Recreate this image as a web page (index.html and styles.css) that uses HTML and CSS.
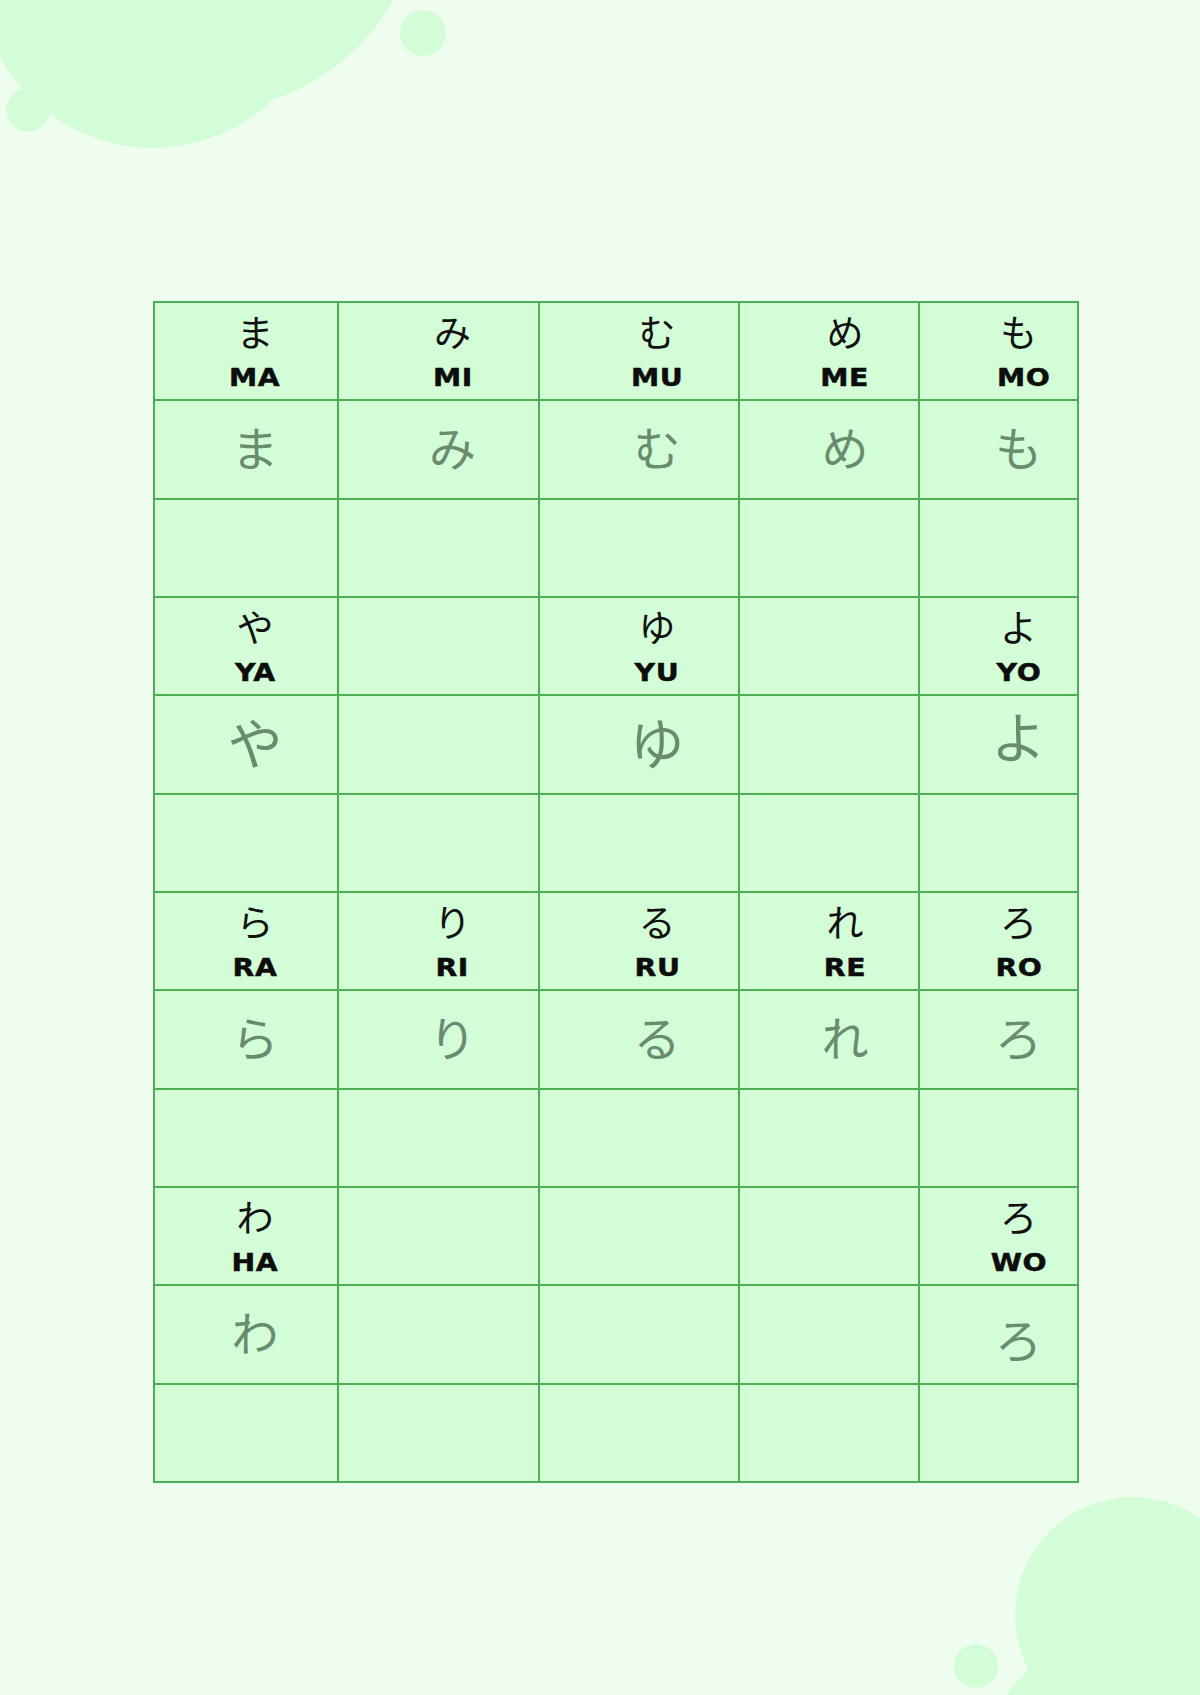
FILE: index.html
```html
<!DOCTYPE html>
<html lang="ja">
<head>
<meta charset="utf-8">
<title>Hiragana Chart</title>
<link rel="stylesheet" href="styles.css">
</head>
<body>
<div class="page">
  <svg class="deco" width="1200" height="1695" viewBox="0 0 1200 1695" aria-hidden="true">
    <circle cx="153" cy="-26" r="174"/>
    <circle cx="200" cy="-112" r="224"/>
    <circle cx="28" cy="110" r="22"/>
    <circle cx="423" cy="33" r="23"/>
    <circle cx="1133" cy="1615" r="118"/>
    <circle cx="1150" cy="1800" r="178"/>
    <circle cx="976" cy="1666" r="22"/>
  </svg>

  <div class="sheet">
    <!-- row 1 -->
    <div class="cell head"><span class="kana">ま</span><span class="roma">MA</span></div>
    <div class="cell head"><span class="kana">み</span><span class="roma">MI</span></div>
    <div class="cell head"><span class="kana">む</span><span class="roma">MU</span></div>
    <div class="cell head"><span class="kana">め</span><span class="roma">ME</span></div>
    <div class="cell head"><span class="kana">も</span><span class="roma shift">MO</span></div>
    <!-- row 2 -->
    <div class="cell practice"><span class="trace">ま</span></div>
    <div class="cell practice"><span class="trace">み</span></div>
    <div class="cell practice"><span class="trace">む</span></div>
    <div class="cell practice"><span class="trace">め</span></div>
    <div class="cell practice"><span class="trace">も</span></div>
    <!-- row 3 -->
    <div class="cell"></div><div class="cell"></div><div class="cell"></div><div class="cell"></div><div class="cell"></div>
    <!-- row 4 -->
    <div class="cell head"><span class="kana">や</span><span class="roma">YA</span></div>
    <div class="cell head"></div>
    <div class="cell head"><span class="kana">ゆ</span><span class="roma">YU</span></div>
    <div class="cell head"></div>
    <div class="cell head"><span class="kana">よ</span><span class="roma">YO</span></div>
    <!-- row 5 -->
    <div class="cell practice big"><span class="trace">や</span></div>
    <div class="cell practice big"></div>
    <div class="cell practice big"><span class="trace">ゆ</span></div>
    <div class="cell practice big"></div>
    <div class="cell practice big"><span class="trace up">よ</span></div>
    <!-- row 6 -->
    <div class="cell"></div><div class="cell"></div><div class="cell"></div><div class="cell"></div><div class="cell"></div>
    <!-- row 7 -->
    <div class="cell head"><span class="kana">ら</span><span class="roma">RA</span></div>
    <div class="cell head"><span class="kana">り</span><span class="roma">RI</span></div>
    <div class="cell head"><span class="kana">る</span><span class="roma">RU</span></div>
    <div class="cell head"><span class="kana">れ</span><span class="roma">RE</span></div>
    <div class="cell head"><span class="kana">ろ</span><span class="roma">RO</span></div>
    <!-- row 8 -->
    <div class="cell practice"><span class="trace">ら</span></div>
    <div class="cell practice"><span class="trace">り</span></div>
    <div class="cell practice"><span class="trace">る</span></div>
    <div class="cell practice"><span class="trace">れ</span></div>
    <div class="cell practice"><span class="trace">ろ</span></div>
    <!-- row 9 -->
    <div class="cell"></div><div class="cell"></div><div class="cell"></div><div class="cell"></div><div class="cell"></div>
    <!-- row 10 -->
    <div class="cell head"><span class="kana">わ</span><span class="roma">HA</span></div>
    <div class="cell head"></div>
    <div class="cell head"></div>
    <div class="cell head"></div>
    <div class="cell head"><span class="kana">ろ</span><span class="roma">WO</span></div>
    <!-- row 11 -->
    <div class="cell practice"><span class="trace">わ</span></div>
    <div class="cell practice"></div>
    <div class="cell practice"></div>
    <div class="cell practice"></div>
    <div class="cell practice"><span class="trace down">ろ</span></div>
    <!-- row 12 -->
    <div class="cell"></div><div class="cell"></div><div class="cell"></div><div class="cell"></div><div class="cell"></div>
  </div>
</div>
</body>
</html>
```

FILE: styles.css
```css
* { box-sizing: border-box; }

html, body {
  margin: 0;
  padding: 0;
  background: #effdf0;
}

.page {
  position: relative;
  width: 1200px;
  height: 1695px;
  overflow: hidden;
  background: #effdf0;
  padding-top: 301px;
  padding-left: 153px;
  font-family: "Noto Sans CJK JP", "Noto Sans", sans-serif;
}

.deco {
  position: absolute;
  top: 0;
  left: 0;
  fill: #d3fdd6;
  z-index: 0;
}

.sheet {
  position: relative;
  z-index: 1;
  display: grid;
  grid-template-columns: 182px 199px 198px 178px 157px;
  grid-template-rows: repeat(12, 96.33px);
  gap: 2px;
  padding: 2px;
  width: 926px;
  background: #4cb052;
}

.cell {
  background: #d3fdd6;
  display: flex;
  flex-direction: column;
  align-items: center;
}

.cell:nth-child(5n+1) { padding-left: 18px; }
.cell:nth-child(5n+2) { padding-left: 28px; }
.cell:nth-child(5n+3) { padding-left: 36px; }
.cell:nth-child(5n+4) { padding-left: 32px; }
.cell:nth-child(5n+5) { padding-left: 40px; }

.head {
  padding-top: 9px;
}

.kana {
  font-family: "Noto Sans CJK JP", sans-serif;
  font-size: 37px;
  line-height: 38px;
  color: #111;
  font-weight: 400;
}

.roma {
  margin-top: 15px;
  font-family: "DejaVu Sans", sans-serif;
  font-weight: 700;
  font-size: 24px;
  line-height: 26px;
  color: #0d0d0d;
  transform: scaleX(1.18);
  letter-spacing: 0.5px;
  -webkit-text-stroke: 0.5px #0d0d0d;
}

.roma.shift { margin-left: 10px; }

.practice {
  justify-content: center;
  padding-bottom: 7px;
}

.trace {
  font-family: "Noto Sans CJK JP", sans-serif;
  font-size: 47px;
  line-height: 47px;
  color: #6a8c6e;
}

.big .trace {
  font-size: 55px;
  line-height: 55px;
}

.trace.up { margin-top: -12px; }
.trace.down { margin-top: 14px; }
```
